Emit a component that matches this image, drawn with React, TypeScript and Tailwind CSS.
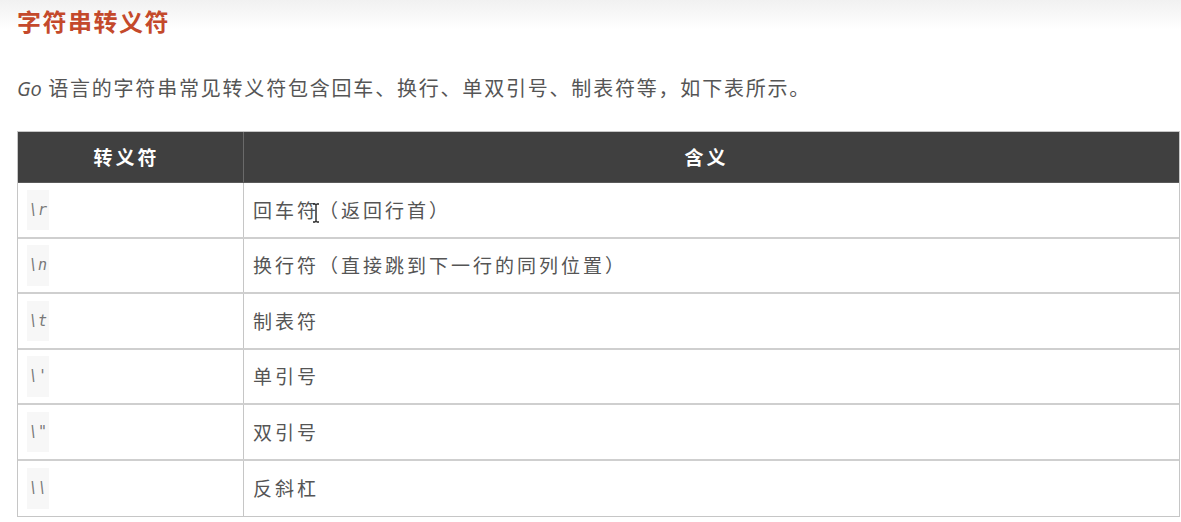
const rows = [
  { code: "\\r", text: "回车符（返回行首）", cursor: true },
  { code: "\\n", text: "换行符（直接跳到下一行的同列位置）" },
  { code: "\\t", text: "制表符" },
  { code: "\\'", text: "单引号" },
  { code: '\\"', text: "双引号" },
  { code: "\\\\", text: "反斜杠" },
];

const cjk = "font-['Microsoft_YaHei','Noto_Sans_CJK_SC',sans-serif]";

export default function App() {
  return (
    <div className={`w-[1181px] h-[522px] overflow-hidden bg-white ${cjk}`}>
      <div className="h-[30px] bg-gradient-to-b from-[#f1f1f1] to-white pl-[17px] pt-[4px]">
        <h2 className="text-[24px] leading-[34px] font-bold text-[#c4492b] tracking-[1.5px]">字符串转义符</h2>
      </div>
      <p className="mt-[43px] pl-[17px] text-[20px] leading-[30px] text-[#555] tracking-[1.8px]">
        <span className="italic font-['Open_Sans',sans-serif] tracking-normal">Go</span> 语言的字符串常见转义符包含回车、换行、单双引号、制表符等，如下表所示。
      </p>
      <div className="mt-[27px] ml-[17px] w-[1163px] border border-[#c6c6c6]">
        <div className="flex h-[51px] bg-[#404040] border-b border-[#5a5a5a] text-white font-bold text-[19px] tracking-[3px]">
          <div className="w-[226px] flex items-center justify-center pr-[8px] border-r border-[#6a6a6a]">转义符</div>
          <div className="flex-1 flex items-center justify-center pr-[10px]">含义</div>
        </div>
        {rows.map((r, i) => (
          <div key={i} className={`flex h-[55.5px] ${i < rows.length - 1 ? "border-b-2 border-[#cfcfcf]" : ""}`}>
            <div className="w-[226px] flex items-center pl-[9px] border-r border-[#c6c6c6]">
              <code className="bg-[#f7f7f7] px-[2px] py-[9px] text-[15px] italic text-[#777] font-['DejaVu_Sans_Mono',monospace]">
                {r.code}
              </code>
            </div>
            <div className="relative flex-1 flex items-center pl-[9px] text-[19px] text-[#555] tracking-[3px]">
              {r.text}
              {r.cursor && (
                <svg className="absolute left-[68px] top-[20px]" width="8" height="20" viewBox="0 0 8 20">
                  <path d="M1 1h2.5M4.5 1H7M4 1v18M1 19h2.5M4.5 19H7" stroke="#222" strokeWidth="1.4" fill="none" />
                </svg>
              )}
            </div>
          </div>
        ))}
      </div>
    </div>
  );
}
